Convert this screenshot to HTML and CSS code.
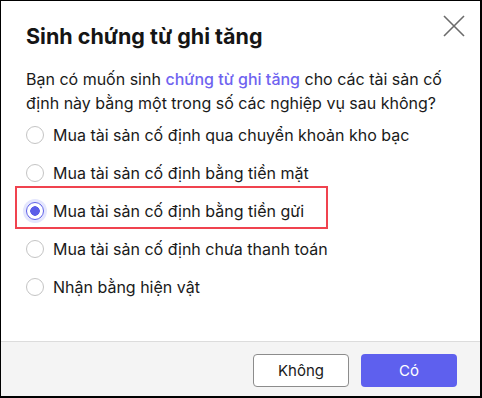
FILE: index.html
```html
<!DOCTYPE html>
<html lang="vi">
<head>
    <meta charset="UTF-8">
    <meta name="viewport" content="width=device-width, initial-scale=1.0">
    <title>Sinh chứng từ ghi tăng</title>
    <link rel="stylesheet" href="styles.css">
</head>
<body>
    <div class="dialog">
        <div class="header">
            <h1>Sinh chứng từ ghi tăng</h1>
            <button class="close" aria-label="Đóng">
                <svg width="22" height="22" viewBox="0 0 22 22">
                    <path d="M1 1 L21 21 M21 1 L1 21" stroke="#6b6b6b" stroke-width="1.6" fill="none"/>
                </svg>
            </button>
        </div>

        <div class="content">
            <p class="question">Bạn có muốn sinh <span class="link">chứng từ ghi tăng</span> cho các tài sản cố định này bằng một trong số các nghiệp vụ sau không?</p>

            <label class="option">
                <input type="radio" name="nghiep-vu">
                <span>Mua tài sản cố định qua chuyển khoản kho bạc</span>
            </label>
            <label class="option">
                <input type="radio" name="nghiep-vu">
                <span>Mua tài sản cố định bằng tiền mặt</span>
            </label>
            <label class="option highlighted">
                <input type="radio" name="nghiep-vu" checked>
                <span>Mua tài sản cố định bằng tiền gửi</span>
            </label>
            <label class="option">
                <input type="radio" name="nghiep-vu">
                <span>Mua tài sản cố định chưa thanh toán</span>
            </label>
            <label class="option">
                <input type="radio" name="nghiep-vu">
                <span>Nhận bằng hiện vật</span>
            </label>
        </div>

        <div class="footer">
            <button class="btn btn-secondary">Không</button>
            <button class="btn btn-primary">Có</button>
        </div>
    </div>
</body>
</html>
```

FILE: styles.css
```css
body {
    margin: 0;
    padding: 0;
    font-family: Inter, "Noto Sans", sans-serif;
    color: #1a1a1a;
    background-color: #fff;
}
.dialog {
    width: 482px;
    height: 398px;
    box-sizing: border-box;
    border-style: solid;
    border-color: #000;
    border-width: 1px 2px 2px 1px;
    display: flex;
    flex-direction: column;
    background-color: #fff;
}
.header {
    display: flex;
    justify-content: space-between;
    align-items: flex-start;
    padding: 21px 15px 0 25px;
}
h1 {
    margin: 0;
    font-size: 21.5px;
    line-height: 28px;
    font-weight: 700;
    color: #151515;
}
.close {
    background: none;
    border: none;
    padding: 0;
    margin-top: -7px;
    cursor: pointer;
    width: 22px;
    height: 22px;
}
.content {
    flex: 1;
    padding: 17px 20px 0 25px;
}
.question {
    margin: 0 0 1px;
    font-size: 16px;
    line-height: 24px;
}
.link {
    color: #6f63f0;
    font-weight: 500;
}
.option {
    position: relative;
    display: flex;
    align-items: center;
    gap: 9px;
    height: 38px;
    font-size: 16px;
    cursor: pointer;
}
.option input {
    appearance: none;
    -webkit-appearance: none;
    margin: 0;
    width: 18px;
    height: 18px;
    border: 1px solid #c4c4c4;
    border-radius: 50%;
    background-color: #fff;
    box-sizing: border-box;
    flex-shrink: 0;
}
.option input:checked {
    border-color: #5b5ee8;
    box-shadow: 0 0 0 3px #e4e6fd;
    background: radial-gradient(circle, #5b5ee8 0 4.5px, #fff 5px);
}
.highlighted::after {
    content: "";
    position: absolute;
    left: -11px;
    top: -6px;
    width: 313px;
    height: 43px;
    border: 2px solid #f0434f;
    box-sizing: border-box;
}
.footer {
    display: flex;
    justify-content: flex-end;
    gap: 12px;
    padding: 12px 23px 9px;
    background-color: #f4f4f4;
    border-top: 1px solid #dcdcdc;
}
.btn {
    width: 96px;
    height: 33px;
    border-radius: 4px;
    font-family: Inter, "Noto Sans", sans-serif;
    font-size: 15px;
    cursor: pointer;
}
.btn-secondary {
    background-color: #fff;
    border: 1px solid #8c8c8c;
    color: #1a1a1a;
}
.btn-primary {
    background-color: #5e60ee;
    border: none;
    color: #fff;
}
```
